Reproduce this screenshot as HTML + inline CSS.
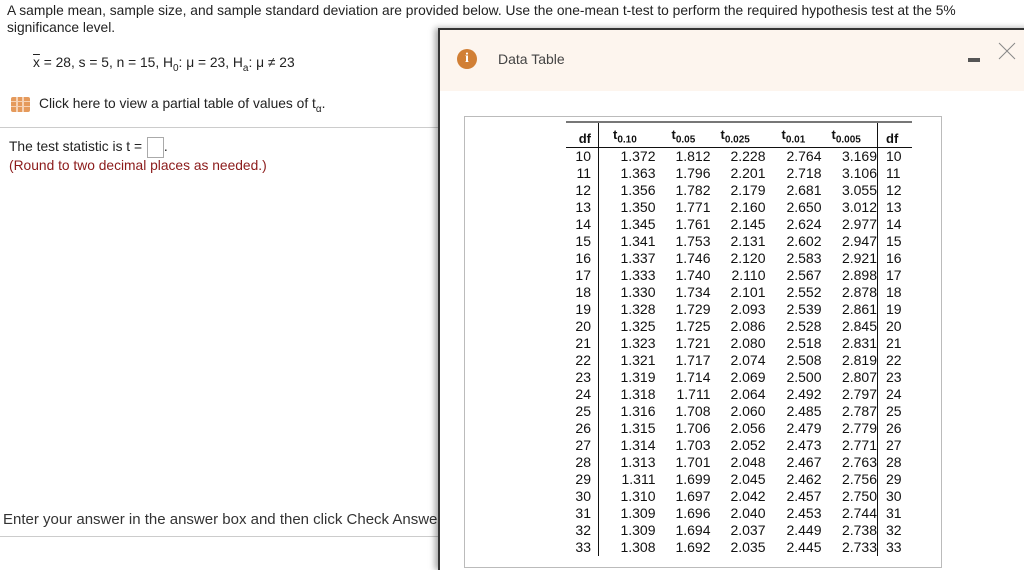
<!DOCTYPE html>
<html><head><meta charset="utf-8"><style>
body{margin:0;width:1024px;height:553px;overflow:hidden;background:#fff;font-family:"Liberation Sans",Arial,sans-serif;position:relative;color:#222}
.a{position:absolute;white-space:nowrap}
.t{font-size:13.8px}
table{position:absolute;left:566px;top:121px;border-collapse:collapse;font-size:14px;color:#111;font-family:"Liberation Sans",Arial,sans-serif}
td{padding:0;height:17px;line-height:17px;text-align:right}
th{height:22px;font-size:13px;font-weight:bold;text-align:left;vertical-align:bottom;padding-bottom:1px}
th sub{font-size:10px}
.l{border-right:1.5px solid #111;padding-right:7px;width:24px}
.r{border-right:1.5px solid #111}
.d{text-align:left;padding-left:8px;width:25px}
thead tr{border-top:2px solid #777;border-bottom:1.5px solid #111}
</style></head><body>
<div class="a t" style="left:7px;top:3px">A sample mean, sample size, and sample standard deviation are provided below. Use the one-mean t-test to perform the required hypothesis test at the 5%</div>
<div class="a t" style="left:7px;top:20px">significance level.</div>
<div class="a t" style="left:33px;top:55px"><span style="text-decoration:overline">x</span> = 28, s = 5, n = 15, H<sub style="font-size:10px">0</sub>: μ = 23, H<sub style="font-size:10px">a</sub>: μ ≠ 23</div>
<div class="a" style="left:11px;top:97px;width:19px;height:15px;background:#e59a5c;border-radius:2px;background-image:linear-gradient(90deg,transparent 5px,#f6d2b5 5px,#f6d2b5 7px,transparent 7px,transparent 11px,#f6d2b5 11px,#f6d2b5 13px,transparent 13px),linear-gradient(transparent 4px,#f6d2b5 4px,#f6d2b5 5px,transparent 5px,transparent 9px,#f6d2b5 9px,#f6d2b5 10px,transparent 10px)"></div>
<div class="a t" style="left:39px;top:96px">Click here to view a partial table of values of t<sub style="font-size:10px">α</sub>.</div>
<div class="a" style="left:0;top:127px;width:440px;height:1px;background:#ccc"></div>
<div class="a t" style="left:9px;top:137px">The test statistic is t = <span style="display:inline-block;width:15px;height:19px;border:1px solid #aaa;vertical-align:middle;margin-left:1px"></span>.</div>
<div class="a t" style="left:9px;top:158px;color:#8b1a1a">(Round to two decimal places as needed.)</div>
<div class="a" style="left:3px;top:511px;color:#333;font-size:15px">Enter your answer in the answer box and then click Check Answer.</div>
<div class="a" style="left:0;top:536px;width:440px;height:1px;background:#ccc"></div>

<div class="a" style="left:438px;top:28px;width:600px;height:540px;background:#fff;border-left:2px solid #333;border-top:2px solid #333;box-shadow:-3px 0 6px rgba(0,0,0,.35)">
<div style="height:61px;background:#fdf5ee"></div>
</div>
<div class="a" style="left:457px;top:49px;width:20px;height:20px;border-radius:50%;background:#d17f35;color:#fff;font:bold 14px 'Liberation Serif',serif;text-align:center;line-height:20px">i</div>
<div class="a" style="left:498px;top:51px;font-size:14px;color:#444">Data Table</div>
<div class="a" style="left:968px;top:58px;width:12px;height:4px;background:#555"></div>
<svg class="a" style="left:998px;top:42px" width="18" height="18"><path d="M1 1L17 17M17 1L1 17" stroke="#888" stroke-width="1"/></svg>
<div class="a" style="left:464px;top:116px;width:476px;height:450px;border:1px solid #bbb"></div>
<table>
<thead><tr><th class="l" style="text-align:right">df</th><th style="width:57px;padding-left:14px;box-sizing:border-box">t<sub>0.10</sub></th><th style="width:55px;padding-left:16px;box-sizing:border-box">t<sub>0.05</sub></th><th style="width:55px;padding-left:10px;box-sizing:border-box">t<sub>0.025</sub></th><th style="width:56px;padding-left:16px;box-sizing:border-box">t<sub>0.01</sub></th><th class="r" style="width:56px;padding-left:10px;box-sizing:border-box">t<sub>0.005</sub></th><th class="d">df</th></tr></thead>
<tbody>
<tr><td class="l">10</td><td>1.372</td><td>1.812</td><td>2.228</td><td>2.764</td><td class="r">3.169</td><td class="d">10</td></tr>
<tr><td class="l">11</td><td>1.363</td><td>1.796</td><td>2.201</td><td>2.718</td><td class="r">3.106</td><td class="d">11</td></tr>
<tr><td class="l">12</td><td>1.356</td><td>1.782</td><td>2.179</td><td>2.681</td><td class="r">3.055</td><td class="d">12</td></tr>
<tr><td class="l">13</td><td>1.350</td><td>1.771</td><td>2.160</td><td>2.650</td><td class="r">3.012</td><td class="d">13</td></tr>
<tr><td class="l">14</td><td>1.345</td><td>1.761</td><td>2.145</td><td>2.624</td><td class="r">2.977</td><td class="d">14</td></tr>
<tr><td class="l">15</td><td>1.341</td><td>1.753</td><td>2.131</td><td>2.602</td><td class="r">2.947</td><td class="d">15</td></tr>
<tr><td class="l">16</td><td>1.337</td><td>1.746</td><td>2.120</td><td>2.583</td><td class="r">2.921</td><td class="d">16</td></tr>
<tr><td class="l">17</td><td>1.333</td><td>1.740</td><td>2.110</td><td>2.567</td><td class="r">2.898</td><td class="d">17</td></tr>
<tr><td class="l">18</td><td>1.330</td><td>1.734</td><td>2.101</td><td>2.552</td><td class="r">2.878</td><td class="d">18</td></tr>
<tr><td class="l">19</td><td>1.328</td><td>1.729</td><td>2.093</td><td>2.539</td><td class="r">2.861</td><td class="d">19</td></tr>
<tr><td class="l">20</td><td>1.325</td><td>1.725</td><td>2.086</td><td>2.528</td><td class="r">2.845</td><td class="d">20</td></tr>
<tr><td class="l">21</td><td>1.323</td><td>1.721</td><td>2.080</td><td>2.518</td><td class="r">2.831</td><td class="d">21</td></tr>
<tr><td class="l">22</td><td>1.321</td><td>1.717</td><td>2.074</td><td>2.508</td><td class="r">2.819</td><td class="d">22</td></tr>
<tr><td class="l">23</td><td>1.319</td><td>1.714</td><td>2.069</td><td>2.500</td><td class="r">2.807</td><td class="d">23</td></tr>
<tr><td class="l">24</td><td>1.318</td><td>1.711</td><td>2.064</td><td>2.492</td><td class="r">2.797</td><td class="d">24</td></tr>
<tr><td class="l">25</td><td>1.316</td><td>1.708</td><td>2.060</td><td>2.485</td><td class="r">2.787</td><td class="d">25</td></tr>
<tr><td class="l">26</td><td>1.315</td><td>1.706</td><td>2.056</td><td>2.479</td><td class="r">2.779</td><td class="d">26</td></tr>
<tr><td class="l">27</td><td>1.314</td><td>1.703</td><td>2.052</td><td>2.473</td><td class="r">2.771</td><td class="d">27</td></tr>
<tr><td class="l">28</td><td>1.313</td><td>1.701</td><td>2.048</td><td>2.467</td><td class="r">2.763</td><td class="d">28</td></tr>
<tr><td class="l">29</td><td>1.311</td><td>1.699</td><td>2.045</td><td>2.462</td><td class="r">2.756</td><td class="d">29</td></tr>
<tr><td class="l">30</td><td>1.310</td><td>1.697</td><td>2.042</td><td>2.457</td><td class="r">2.750</td><td class="d">30</td></tr>
<tr><td class="l">31</td><td>1.309</td><td>1.696</td><td>2.040</td><td>2.453</td><td class="r">2.744</td><td class="d">31</td></tr>
<tr><td class="l">32</td><td>1.309</td><td>1.694</td><td>2.037</td><td>2.449</td><td class="r">2.738</td><td class="d">32</td></tr>
<tr><td class="l">33</td><td>1.308</td><td>1.692</td><td>2.035</td><td>2.445</td><td class="r">2.733</td><td class="d">33</td></tr>
</tbody></table>
</body></html>
